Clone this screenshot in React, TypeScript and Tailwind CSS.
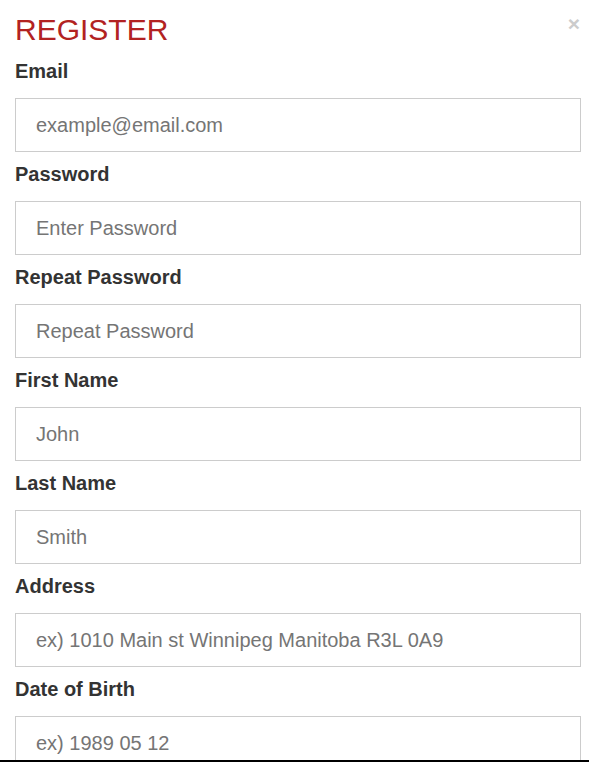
import React from "react";

const fields = [
  { label: "Email", ph: "example@email.com" },
  { label: "Password", ph: "Enter Password" },
  { label: "Repeat Password", ph: "Repeat Password" },
  { label: "First Name", ph: "John" },
  { label: "Last Name", ph: "Smith" },
  { label: "Address", ph: "ex) 1010 Main st Winnipeg Manitoba R3L 0A9" },
  { label: "Date of Birth", ph: "ex) 1989 05 12" },
];

export default function App() {
  return (
    <div
      className="relative h-[762px] overflow-hidden border-b-2 border-black bg-white pl-[15px] pr-[8px] pt-[13px]"
      style={{ fontFamily: '"Liberation Sans", Arial, sans-serif' }}
    >
      <div className="absolute right-[9px] top-[10px] text-[21px] font-bold leading-[28px] text-[#cccccc]">×</div>
      <h1 className="mb-[12px] h-[33px] text-[30px] font-normal leading-[33px] text-[#b22222]">REGISTER</h1>
      {fields.map((f) => (
        <div key={f.label} className="mb-[9px]">
          <label className="mb-[14px] block h-[26px] text-[20px] font-bold leading-[26px] text-[#333333]">{f.label}</label>
          <input
            className="block h-[54px] w-full border border-[#cccccc] bg-white px-[20px] text-[20px] text-[#555555] outline-none placeholder:text-[#757575]"
            placeholder={f.ph}
          />
        </div>
      ))}
    </div>
  );
}
